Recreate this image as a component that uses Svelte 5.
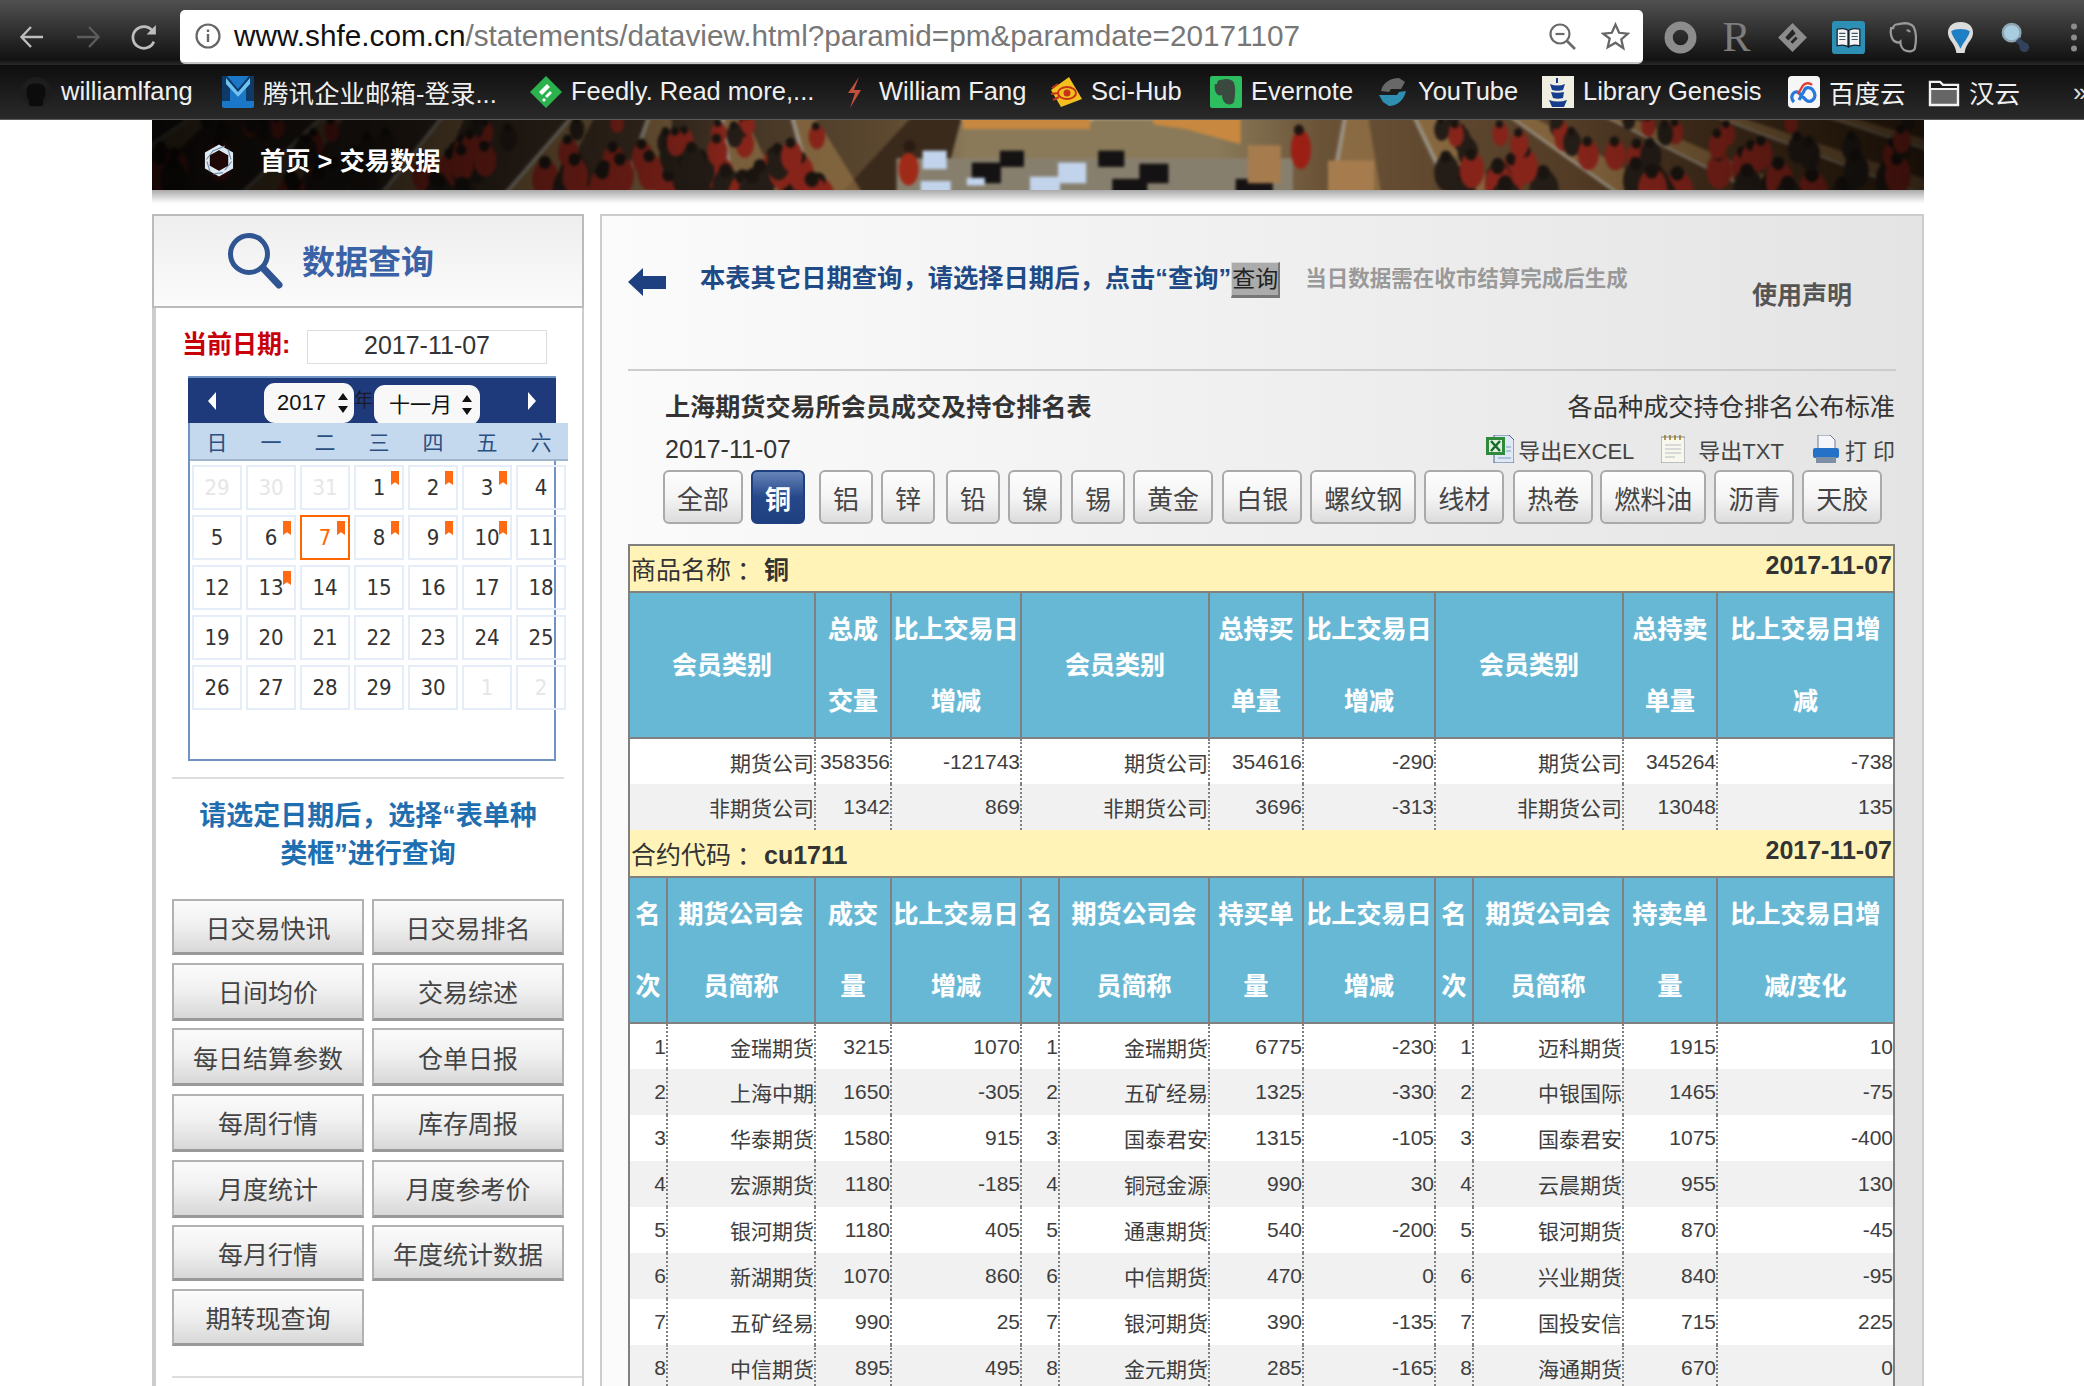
<script>
  const bookmarks = [
    { t: 'williamlfang', k: 'gh', x: 20 }, { t: '腾讯企业邮箱-登录...', k: 'qq', x: 222 }, { t: 'Feedly. Read more,...', k: 'fd', x: 530 },
    { t: 'William Fang', k: 'wf', x: 838 }, { t: 'Sci-Hub', k: 'sh', x: 1050 }, { t: 'Evernote', k: 'en', x: 1210 },
    { t: 'YouTube', k: 'yt', x: 1377 }, { t: 'Library Genesis', k: 'lg', x: 1542 }, { t: '百度云', k: 'bd', x: 1788 }, { t: '汉云', k: 'fo', x: 1928 }
  ];
  const bmWidth = (i) => (i + 1 < bookmarks.length ? bookmarks[i + 1].x - bookmarks[i].x : 120);
  const weekdays = ['日','一','二','三','四','五','六'];
  const days = [
    [29,0,0],[30,0,0],[31,0,0],[1,1,1],[2,1,1],[3,1,1],[4,1,0],
    [5,1,0],[6,1,1],[7,2,1],[8,1,1],[9,1,1],[10,1,1],[11,1,0],
    [12,1,0],[13,1,1],[14,1,0],[15,1,0],[16,1,0],[17,1,0],[18,1,0],
    [19,1,0],[20,1,0],[21,1,0],[22,1,0],[23,1,0],[24,1,0],[25,1,0],
    [26,1,0],[27,1,0],[28,1,0],[29,1,0],[30,1,0],[1,0,0],[2,0,0]
  ];
  const sideButtons = ['日交易快讯','日交易排名','日间均价','交易综述','每日结算参数','仓单日报','每周行情','库存周报','月度统计','月度参考价','每月行情','年度统计数据','期转现查询'];
  const tabs = ['全部','铜','铝','锌','铅','镍','锡','黄金','白银','螺纹钢','线材','热卷','燃料油','沥青','天胶'];
  const cols = [38,148,76,130,38,150,94,132,38,150,94,177];
  const summary = [
    ['期货公司','358356','-121743','期货公司','354616','-290','期货公司','345264','-738'],
    ['非期货公司','1342','869','非期货公司','3696','-313','非期货公司','13048','135']
  ];
  const ranks = [
    [1,'金瑞期货',3215,1070,1,'金瑞期货',6775,-230,1,'迈科期货',1915,10],
    [2,'上海中期',1650,-305,2,'五矿经易',1325,-330,2,'中银国际',1465,-75],
    [3,'华泰期货',1580,915,3,'国泰君安',1315,-105,3,'国泰君安',1075,-400],
    [4,'宏源期货',1180,-185,4,'铜冠金源',990,30,4,'云晨期货',955,130],
    [5,'银河期货',1180,405,5,'通惠期货',540,-200,5,'银河期货',870,-45],
    [6,'新湖期货',1070,860,6,'中信期货',470,0,6,'兴业期货',840,-95],
    [7,'五矿经易',990,25,7,'银河期货',390,-135,7,'国投安信',715,225],
    [8,'中信期货',895,495,8,'金元期货',285,-165,8,'海通期货',670,0]
  ];
  const rankHead = ['名<br>次','期货公司会<br>员简称','成交<br>量','比上交易日<br>增减','名<br>次','期货公司会<br>员简称','持买单<br>量','比上交易日<br>增减','名<br>次','期货公司会<br>员简称','持卖单<br>量','比上交易日增<br>减/变化'];

  // seeded scatter for the trading-floor photograph in the banner
  let seed = 23;
  const rnd = () => (seed = (seed * 16807) % 2147483647) / 2147483647;
  const aisles = [[-70,40],[90,170],[230,290],[353,419],[469,496],[579,569],[659,639],[1176,1190],[1295,1259],[1461,1355],[1600,1450],[1760,1560],[1900,1670]];
  const people = [];
  aisles.forEach(([b, t], i) => {
    if (i === 6 || i === 7) return;
    for (let n = 0; n < 16; n++) {
      const y = rnd() * 74 - 2;
      const x = t + (b - t) * (y / 70) + 12 + rnd() * 90;
      people.push({ x, y, r: 6 + (y / 70) * 9, red: rnd() > 0.5 });
    }
  });
  const darkMonitors = [[848,31,24,15],[820,42,29,19],[946,31,26,15],[987,43,29,18],[960,57,35,13],[1083,57,37,13]];
  const lightMonitors = [[771,31,24,17],[906,42,28,19],[769,59,30,11],[878,55,30,15],[815,56,18,7]];
</script>

<div class="page">
  <header class="toolbar">
    <svg class="nav" viewBox="0 0 26 26"><path d="M24 13H3M12 3 2.500 13 12 23" fill="none" stroke="#bdbdbd" stroke-width="2.400"/></svg>
    <svg class="nav fwd" viewBox="0 0 26 26"><path d="M2 13h21M14 3l9.500 10L14 23" fill="none" stroke="#5c5c5c" stroke-width="2.400"/></svg>
    <svg class="nav rel" viewBox="0 0 28 28"><path d="M23 18a10.500 10.500 0 1 1-1-10" fill="none" stroke="#bdbdbd" stroke-width="2.600"/><path d="M25 2v9h-9z" fill="#bdbdbd"/></svg>
    <div class="addr">
      <svg class="info" viewBox="0 0 28 28"><circle cx="14" cy="14" r="11.500" fill="none" stroke="#666" stroke-width="2.200"/><path d="M14 12v8M14 7.500v2.500" stroke="#666" stroke-width="2.400"/></svg>
      <span class="url"><b>www.shfe.com.cn</b>/statements/dataview.html?paramid=pm&amp;paramdate=20171107</span>
      <svg class="zoomi" viewBox="0 0 28 28"><circle cx="12" cy="12" r="9.500" fill="none" stroke="#6a6a6a" stroke-width="2.200"/><path d="M19 19l8 8" stroke="#6a6a6a" stroke-width="2.600"/><path d="M7.500 12h9" stroke="#6a6a6a" stroke-width="2.200"/></svg>
      <svg class="star" viewBox="0 0 28 28"><path d="M14 2.500l3.500 7.900 8.500.8-6.400 5.700 1.900 8.400L14 20l-7.500 4.300 1.900-8.400L2 11.200l8.500-.8z" fill="none" stroke="#666" stroke-width="2.200"/></svg>
    </div>
    <div class="exts">
      <svg viewBox="0 0 32 32"><circle cx="16" cy="16" r="11.500" fill="none" stroke="#8c8c8c" stroke-width="8"/></svg>
      <span class="rlogo">R</span>
      <svg viewBox="0 0 32 32"><path d="M16 2 30 16 16 30 2 16z" fill="#8c8c8c"/><path d="M16 8 9 16l3 3 7-7zM19 15l-5 5 2 2 5-5z" fill="#262626"/></svg>
      <svg viewBox="0 0 32 32"><rect width="32" height="32" rx="3" fill="#2c8fb3"/><path d="M5 8c4-1 8-1 10.500 1v16C13 23 9 23 5 24zM27 8c-4-1-8-1-10.500 1v16c2.500-2 6.500-2 10.500-1z" fill="#f4f4f4" stroke="#123" stroke-width="1.200"/><path d="M7 12h6M7 15h6M7 18h6M19 12h6M19 15h6M19 18h6" stroke="#456" stroke-width="1"/></svg>
      <svg viewBox="0 0 32 32"><path d="M10 3C7 3 5 5 5 7H3c-1 4 0 11 4 13 2 1 4 1 5 0 0 4 2 8 6 9 3 1 7 0 8-2 1-5 2-15-1-21-2-3-6-4-9-4z" fill="none" stroke="#9a9a9a" stroke-width="2.200"/><path d="M18 9c2 0 3 1 3 2" stroke="#9a9a9a" stroke-width="2" fill="none"/></svg>
      <svg viewBox="0 0 32 32"><path d="M16 1C7 1 3 7 4 13c1 6 7 9 8 18h8c1-9 7-12 8-18 1-6-3-12-12-12z" fill="#dcdcdc"/><path d="M7 10c4-3 14-3 18 0-1 6-6 10-9 17-3-7-8-11-9-17z" fill="#1f7fc4"/></svg>
      <svg viewBox="0 0 34 34"><circle cx="12" cy="12" r="9" fill="#a9cde0" stroke="#8fa6b0" stroke-width="2.500"/><path d="M18 19l9 9" stroke="#31425a" stroke-width="6"/><circle cx="25" cy="27" r="5" fill="#31425a"/></svg>
      <svg class="dots" viewBox="0 0 8 32"><circle cx="4" cy="5" r="3" fill="#8c8c8c"/><circle cx="4" cy="16" r="3" fill="#8c8c8c"/><circle cx="4" cy="27" r="3" fill="#8c8c8c"/></svg>
    </div>
  </header>

  <nav class="bookmarks">
    {#each bookmarks as b, i}
      <div class="bm" style="width:{bmWidth(i)}px">
        <svg viewBox="0 0 32 32">
          {#if b.k === 'gh'}
            <circle cx="16" cy="16" r="15" fill="#1d1d1d"/><path d="M9 30V24C6 21 5 14 9 9c3-2 11-2 14 0 4 5 3 12 0 15v6" fill="#0c0c0c"/>
          {:else if b.k === 'qq'}
            <rect width="32" height="32" rx="2" fill="#1b78c9"/><path d="M0 0h5l11 13L27 0h5v25H24V12l-8 9-8-9v13H0z" fill="#0d3a66"/><path d="M4 2l12 14L28 2v6l-12 13L4 8z" fill="#6fc3f2"/>
          {:else if b.k === 'fd'}
            <path d="M16 0 32 16 16 32 0 16z" fill="#2bb24c"/><path d="M17 8l-8 8 3 3 8-8zM20 15l-5 5 2 2 5-5zM14 22l-2 2 2 2 2-2z" fill="#fff"/>
          {:else if b.k === 'wf'}
            <path d="M21 1 10 17h7l-5 15 11-18h-7z" fill="#c6513b"/>
          {:else if b.k === 'sh'}
            <path d="M19 1 32 23 11 31 1 14z" fill="#f4c020"/><ellipse cx="17" cy="17" rx="9" ry="6" fill="none" stroke="#c83218" stroke-width="2"/><circle cx="17" cy="17" r="3.500" fill="#c83218"/><path d="M2 12 8 8M1 18l7-1M3 24l6-3" stroke="#c83218" stroke-width="2"/>
          {:else if b.k === 'en'}
            <rect width="32" height="32" rx="2" fill="#2dbe60"/><path d="M10 4C8 4 7 6 7 8H5c-1 4 0 9 3 11 2 1 3 0 4 0 0 4 2 8 5 9 3 1 6 0 7-2 1-5 2-14 0-19-1-3-5-4-8-4z" fill="#3a4a3f"/>
          {:else if b.k === 'yt'}
            <path d="M4 15C6 6 14 2 22 2l6 4-4 7H14l-2 3z" fill="#686868"/><path d="M2 19h18l2-3 7-1c-2 9-9 15-17 15l-6-4z" fill="#2e8fb3"/>
          {:else if b.k === 'lg'}
            <rect width="32" height="32" fill="#efeee0"/><path d="M14 2h2v5h-2zM8 8c5 2 10 2 15 0l-2 6c-3 1-8 1-11 0zM9 16c4 1 9 1 13 0l-1 6c-3 1-7 1-10 0zM7 24c6 2 12 2 18 0l-3 7H10z" fill="#173e8c"/>
          {:else if b.k === 'bd'}
            <rect width="32" height="32" rx="4" fill="#f6f6f6"/><path d="M6 26c-5-5 0-13 5-9l7 7c5 4 11-2 8-8-2-5-8-6-10-1l-5 9" fill="none" stroke="#2878dc" stroke-width="3.200"/><path d="M10 18l4-7c2-4 7-5 10-2" fill="none" stroke="#e53a2e" stroke-width="2.400"/>
          {:else}
            <path d="M2 6h10l3 3h15v20H2z" fill="#666" stroke="#f2f2f2" stroke-width="2.400"/><path d="M2 6h10l3 3h15v4H2z" fill="#1a1a1a" stroke="#f2f2f2" stroke-width="2"/>
          {/if}
        </svg>
        <span>{b.t}</span>
      </div>
    {/each}
    <span class="more">»</span>
  </nav>

  <div class="banner">
    <svg class="photo" viewBox="0 0 1772 70" preserveAspectRatio="none">
      <defs>
        <linearGradient id="floor" x1="0" x2="1" y1="0" y2="0">
          <stop offset="0" stop-color="#2a2018"/><stop offset=".3" stop-color="#3a2c20"/><stop offset=".42" stop-color="#5e4a30"/>
          <stop offset=".46" stop-color="#8a7a5a"/><stop offset=".6" stop-color="#8a7a5a"/><stop offset=".66" stop-color="#6a5236"/>
          <stop offset=".85" stop-color="#4a3420"/><stop offset="1" stop-color="#3a2410"/>
        </linearGradient>
        <linearGradient id="shade" x1="0" x2="1" y1="0" y2="0">
          <stop offset="0" stop-color="#000" stop-opacity=".82"/><stop offset=".12" stop-color="#000" stop-opacity=".68"/><stop offset=".27" stop-color="#000" stop-opacity=".28"/><stop offset=".33" stop-color="#000" stop-opacity="0"/>
          <stop offset=".8" stop-color="#000" stop-opacity="0"/><stop offset="1" stop-color="#000" stop-opacity=".62"/>
        </linearGradient>
      </defs>
      <rect width="1772" height="70" fill="url(#floor)"/>
      <path d="M810 0h130v4H810z" fill="#d0bd92"/>
      <path d="M811 0h127v11H811z" fill="#c8883f"/>
      <path d="M940 0h62v2h-62z" fill="#d0bd92"/>
      <path d="M1001 0h87v25l-55-14-32-4z" fill="#c8883f"/>
      <path d="M690 70 760 0h50l-20 70z" fill="#3a2a1c"/>
      <path d="M745 38h395v32H745z" fill="#877f6e"/>
      {#each aisles as a}
        <path d="M{a[0] + 3} 70 {a[1] + 3} 0h22L{a[0] + 52} 70z" fill="#a5824f" opacity=".55"/>
        <path d="M{a[0]} 70 {a[1]} 0h4L{a[0] + 5} 70z" fill="#a09c90" opacity=".85"/>
      {/each}
      {#each darkMonitors as m}<rect x={m[0]} y={m[1]} width={m[2]} height={m[3]} fill="#141212"/>{/each}
      {#each lightMonitors as m}<rect x={m[0]} y={m[1]} width={m[2]} height={m[3]} fill="#c2d4ec"/>{/each}
      <path d="M1095 26h33v35h-33zM1175 40h46v30h-46z" fill="#a67c4e"/>
      {#each people as p}
        <ellipse cx={p.x} cy={p.y + p.r * .8} rx={p.r * 1.1} ry={p.r * 1.5} fill={p.red ? '#86241a' : '#241c16'}/>
        <circle cx={p.x - 1} cy={p.y - p.r * .5} r={p.r * .5} fill="#191410"/>
      {/each}
      <ellipse cx="757" cy="48" rx="10" ry="15" fill="#a02a18"/><circle cx="758" cy="27" r="6" fill="#2a1c14"/>
      <ellipse cx="1148" cy="30" rx="10" ry="18" fill="#9c1f15"/><circle cx="1146" cy="12" r="5" fill="#1e1410"/>
      <rect width="1772" height="70" fill="url(#shade)"/>
    </svg>
    <svg class="logo" viewBox="0 0 32 34">
      <path d="M16 3.500 28 10.200v13.600L16 30.500 4 23.800V10.200z" fill="none" stroke="#dfe9f2" stroke-width="5"/>
      <path d="M9 7.500 22 2M28.500 16 25 5M22 27 29 18M10 31 20 29.500M3.500 18 7 29M10 7 3 16" stroke="#6d8ba8" stroke-width="1.100"/>
    </svg>
    <span class="crumb">首页 &gt; 交易数据</span>
  </div>

  <div class="layout">
    <aside class="side">
      <div class="side-head">
        <svg viewBox="0 0 56 58"><circle cx="22" cy="22" r="18.500" fill="none" stroke="#2f5592" stroke-width="5"/><path d="M36 36 52 53" stroke="#2f5592" stroke-width="7" stroke-linecap="round"/></svg>
        <span>数据查询</span>
      </div>
      <div class="side-body">
        <div class="cur">
          <span>当前日期:</span>
          <div class="cur-box">2017-11-07</div>
        </div>
        <div class="cal">
          <div class="cal-top">
            <svg class="tri" viewBox="0 0 8 18"><path d="M8 0v18L0 9z" fill="#fff"/></svg>
            <div class="sel yr">2017<svg viewBox="0 0 10 20"><path d="M5 0l5 7H0zM5 20l5-7H0z" fill="#111"/></svg></div>
            <span class="nian">年</span>
            <div class="sel mo"><span>十一月</span><svg viewBox="0 0 10 20"><path d="M5 0l5 7H0zM5 20l5-7H0z" fill="#111"/></svg></div>
            <svg class="tri r" viewBox="0 0 8 18"><path d="M0 0v18l8-9z" fill="#fff"/></svg>
          </div>
          <div class="wk">
            {#each weekdays as w}<span>{w}</span>{/each}
          </div>
          <div class="grid">
            {#each days as d}
              <div class="day" class:off={d[1] === 0} class:today={d[1] === 2}>
                {d[0]}
                {#if d[2]}<i></i>{/if}
              </div>
            {/each}
          </div>
        </div>
        <div class="rule"></div>
        <p class="hint">请选定日期后，选择“表单种<br>类框”进行查询</p>
        <div class="btns">
          {#each sideButtons as s}<div class="sbtn">{s}</div>{/each}
        </div>
        <div class="rule end"></div>
      </div>
    </aside>

    <main class="main">
      <div class="query">
        <svg class="arrow" viewBox="0 0 38 28"><path d="M0 14 15 0v8h23v13H15v7z" fill="#1f4080"/></svg>
        <span class="q-text">本表其它日期查询，请选择日期后，点击“查询”</span>
        <span class="q-btn">查询</span>
        <span class="q-note">当日数据需在收市结算完成后生成</span>
        <span class="q-law">使用声明</span>
      </div>
      <div class="divider"></div>
      <div class="title-row">
        <h1>上海期货交易所会员成交及持仓排名表</h1>
        <span>各品种成交持仓排名公布标准</span>
      </div>
      <div class="date-row">
        <span class="dt">2017-11-07</span>
        <div class="exp">
          <svg class="xl" viewBox="0 0 28 28"><path d="M8 0h15l5 5v23H8z" fill="#dfe8f4" stroke="#44688f"/><rect x="0" y="2" width="19" height="18" fill="#2f8a3c"/><rect x="3" y="5" width="13" height="12" fill="#dff0df"/><path d="M5 6l9 10M14 6 5 16" stroke="#1a6a2a" stroke-width="2.500"/><path d="M20 12h5M20 16h5M12 23h13" stroke="#7d9cc0"/></svg>
          <span class="l1">导出EXCEL</span>
          <svg class="tx" viewBox="0 0 24 28"><rect y="2" width="24" height="26" fill="#f7f7ee" stroke="#7d8a99"/><path d="M4 0v5M9 0v5M14 0v5M19 0v5" stroke="#a07820" stroke-width="1.500"/><path d="M4 10h16M4 14h16M4 18h16M4 22h10" stroke="#b8bcc4"/></svg>
          <span class="l2">导出TXT</span>
          <svg class="pr" viewBox="0 0 28 28"><path d="M6 0h12l5 5v10H6z" fill="#f4f6fa" stroke="#6a7d95"/><rect x="1" y="13" width="26" height="10" rx="2" fill="#2472c8"/><rect x="4" y="22" width="20" height="6" fill="#7d8fa5"/></svg>
          <span class="l3">打 印</span>
        </div>
      </div>
      <div class="tabs">
        {#each tabs as t}<div class="tab" class:on={t === '铜'}>{t}</div>{/each}
      </div>

      <table>
        <colgroup>{#each cols as c}<col style="width:{c}px">{/each}</colgroup>
        <tbody>
          <tr class="band first"><td colspan="12"><div class="band-in"><span>商品名称<i>：</i><b>铜</b></span><b class="bd">2017-11-07</b></div></td></tr>
          <tr class="head">
            <th colspan="2">会员类别</th><th>总成<br>交量</th><th>比上交易日<br>增减</th>
            <th colspan="2">会员类别</th><th>总持买<br>单量</th><th>比上交易日<br>增减</th>
            <th colspan="2">会员类别</th><th>总持卖<br>单量</th><th>比上交易日增<br>减</th>
          </tr>
          {#each summary as r, i}
            <tr class:alt={i % 2 === 1}>
              {#each r as v, j}<td colspan={j % 3 === 0 ? 2 : 1}>{v}</td>{/each}
            </tr>
          {/each}
          <tr class="band"><td colspan="12"><div class="band-in"><span>合约代码<i>：</i><b>cu1711</b></span><b class="bd">2017-11-07</b></div></td></tr>
          <tr class="head">
            {#each rankHead as h}<th>{@html h}</th>{/each}
          </tr>
          {#each ranks as r, i}
            <tr class:alt={i % 2 === 1}>
              {#each r as v}<td>{v}</td>{/each}
            </tr>
          {/each}
        </tbody>
      </table>
    </main>
  </div>
</div>

<style>
  :global(body) { margin: 0; background: #fff; }
  .page {
    width: 2084px; height: 1386px; overflow: hidden; background: #fff; color: #444;
    font-family: "Liberation Sans", "Noto Sans CJK SC", sans-serif;
  }
  .toolbar {
    height: 65px; box-sizing: border-box; padding: 9px 0 0 19px; display: flex; align-items: center;
    background: linear-gradient(#505050, #121212 92%, #2a2a2a);
  }
  .nav { width: 26px; height: 26px; flex: none; }
  .fwd { margin-left: 30px; }
  .rel { margin-left: 29px; width: 29px; height: 29px; }
  .addr {
    margin-left: 21px; width: 1463px; height: 54px; box-sizing: border-box; background: #fff;
    border-radius: 5px; border-bottom: 2px solid #c4c4c4; display: flex; align-items: center; padding-left: 14px;
  }
  .info { width: 28px; height: 28px; flex: none; }
  .url { margin-left: 12px; font-size: 29.750px; color: #777; white-space: nowrap; flex: none; width: 1099px; }
  .url b { font-weight: 400; color: #111; }
  .zoomi { width: 28px; height: 28px; margin-left: 215px; flex: none; }
  .star { width: 29px; height: 29px; margin-left: 25px; flex: none; }
  .exts { margin-left: 21px; display: flex; align-items: center; gap: 23px; }
  .exts svg { width: 33px; height: 33px; flex: none; }
  .rlogo { width: 33px; text-align: center; font: 42px/33px "Liberation Serif", serif; color: #7d7d7d; }
  .exts .dots { width: 8px; margin-left: 14px; }

  .bookmarks {
    height: 55px; box-sizing: border-box; padding-left: 20px; display: flex; align-items: center;
    background: linear-gradient(#0e0e0e, #2a2a2a); border-bottom: 1px solid #5a5a5a; position: relative;
  }
  .bm { display: flex; align-items: center; gap: 9px; color: #f0f0f0; font-size: 25.500px; white-space: nowrap; flex: none; }
  .bm span { margin-top: -2px; }
  .bm svg { width: 32px; height: 32px; flex: none; }
  .more { position: absolute; left: 2073px; color: #ddd; font-size: 26px; }

  .banner {
    margin-left: 152px; width: 1772px; height: 70px; box-sizing: border-box; padding-top: 11px; position: relative; display: flex; align-items: center; overflow: hidden;
  }
  .photo { position: absolute; inset: -3px; width: calc(100% + 6px); height: calc(100% + 6px); filter: blur(1.800px); }
  .logo { position: relative; margin-left: 51px; width: 32px; height: 33px; }
  .crumb { position: relative; margin-left: 25px; font-size: 25.300px; color: #fff; font-weight: 700; margin-top: -3px; }

  .layout { margin: 24px 0 0 152px; width: 1772px; display: flex; gap: 16px; align-items: flex-start; position: relative; }
  .layout::before {
    content: ""; position: absolute; left: 0; right: 0; top: -24px; height: 14px;
    background: linear-gradient(#a9a9a9, #f2f2f2 80%, #fff);
  }

  .side { width: 432px; flex: none; height: 1200px; box-sizing: border-box; }
  .side-head {
    height: 94px; box-sizing: border-box; border: 2px solid #bbb; display: flex; align-items: center; padding-left: 73px;
    background: linear-gradient(#eee, #fbfbfb); color: #3a62a6; font-size: 33px; font-weight: 700; gap: 19px;
  }
  .side-head span { margin-top: -2px; }
  .side-head svg { width: 56px; height: 58px; }
  .side-body { border-left: 4px solid #ccc; border-right: 2px solid #ccc; height: 1100px; box-sizing: border-box; padding: 22px 0 0 16px; }
  .cur { display: flex; align-items: center; height: 34px; padding-left: 10px; }
  .cur span { color: #c8000a; font-size: 25px; font-weight: 700; width: 125px; padding-bottom: 10px; }
  .cur-box { width: 240px; height: 34px; box-sizing: border-box; border: 1px solid #ddd; text-align: center; font-size: 25px; line-height: 29px; color: #333; }
  .cal { margin: 12px 0 0 16px; width: 368px; height: 385px; box-sizing: border-box; border: 2px solid #6f94c4; border-top: 0; position: relative; }
  .cal-top { height: 47px; margin: 0 -2px; background: #1f3a7a; border-top: 2px solid #6f94c4; box-sizing: border-box; display: flex; align-items: center; position: relative; }
  .tri { position: absolute; left: 20px; top: 14px; width: 8px; height: 18px; }
  .tri.r { left: 340px; }
  .sel { position: absolute; background: #f8f8f8; border-radius: 11px; height: 40px; display: flex; align-items: center; color: #111; box-sizing: border-box; white-space: nowrap; }
  .sel svg { width: 10px; height: 20px; flex: none; }
  .yr { left: 76px; top: 5px; width: 90px; font-size: 22px; padding-left: 13px; gap: 12px; }
  .mo { left: 186px; top: 7px; width: 106px; font-size: 21px; padding-left: 15px; gap: 10px; }
  .mo span { margin-top: -5px; }
  .nian { position: absolute; left: 166px; top: 7px; font-size: 19px; color: #1a1a2a; }
  .wk { width: 378px; height: 38px; box-sizing: border-box; background: #c5d9ee; border-bottom: 2px solid #a0b4cc; display: grid; grid-template-columns: repeat(7, 54px); justify-items: center; align-items: center; font-size: 21px; color: #2a4f80; position: relative; }
  .grid { position: relative; margin: 4px 0 0 2px; display: grid; grid-template-columns: repeat(7, 50px); gap: 5px 4px; width: 378px; }
  .day {
    height: 45px; box-sizing: border-box; border: 2px solid #e4edf8; display: flex; align-items: center; justify-content: center;
    position: relative; font: 22px "DejaVu Sans Condensed", "Liberation Sans", sans-serif; color: #333;
  }
  .day.off { color: #e6e6e6; }
  .day.today { border-color: #f60; color: #f60; }
  .day i { position: absolute; top: 4px; right: 3px; width: 8px; height: 14px; background: #ff6a13; clip-path: polygon(0 0, 100% 0, 100% 100%, 50% 80%, 0 100%); }
  .rule { height: 2px; width: 392px; background: #ddd; margin-top: 16px; }
  .rule.end { width: 410px; margin-top: 30px; }
  .hint { margin: 18px 0 0; width: 392px; text-align: center; color: #1f6eb0; font-size: 27px; font-weight: 700; line-height: 38px; }
  .btns { margin-top: 26px; width: 392px; display: grid; grid-template-columns: 192px 192px; column-gap: 8px; grid-template-rows: 56px 58px 58px 58px 58px 56px 57px; row-gap: 7.670px; }
  .sbtn {
    border: 2px solid #b2b2b2; border-bottom: 3px solid #999; box-sizing: border-box; display: flex; align-items: center; justify-content: center;
    background: linear-gradient(#fbfbfb, #f1f1f1 45%, #d8d8d8); font-size: 25px; color: #444;
  }

  .main {
    width: 1324px; flex: none; height: 1200px; box-sizing: border-box; border: 2px solid #ccc; border-bottom: 0; padding: 0 26px 0 26px;
    background: linear-gradient(to right, #fbfbfb, #e4e4e4);
  }
  .query { height: 153px; display: flex; align-items: flex-start; position: relative; }
  .arrow { width: 38px; height: 28px; margin-top: 52px; flex: none; }
  .q-text { margin: 46px 0 0 34px; font-size: 25.300px; line-height: 32px; font-weight: 700; color: #1f4a85; white-space: nowrap; }
  .q-btn {
    margin: 46px 0 0 0; width: 49px; height: 36px; box-sizing: border-box; background: #ababab; text-align: center; color: #222;
    border-width: 1px 2px 3px 1px; border-style: solid; border-color: #d8d8d8 #777 #777 #d8d8d8; font-size: 23px; line-height: 32px; flex: none; white-space: nowrap; overflow: hidden;
  }
  .q-note { margin: 48px 0 0 25px; font-size: 21.500px; line-height: 30px; font-weight: 700; color: #999; white-space: nowrap; }
  .q-law { position: absolute; left: 1124px; top: 64px; font-size: 25px; line-height: 30px; font-weight: 700; color: #555; }
  .divider { height: 2px; background: #ccc; width: 1268px; }
  .title-row { margin-top: 19px; padding-left: 37px; height: 30px; display: flex; justify-content: space-between; align-items: center; font-size: 25.200px; color: #333; width: 1267px; box-sizing: border-box; }
  .title-row h1 { margin: 0; font-size: 25.100px; font-weight: 700; color: #333; }
  .date-row { margin-top: 14px; padding-left: 37px; height: 30px; width: 1267px; box-sizing: border-box; display: flex; justify-content: space-between; align-items: center; font-size: 25px; color: #333; }
  .exp { display: flex; align-items: center; font-size: 22px; color: #444; }
  .exp svg { flex: none; height: 28px; }
  .xl { width: 28px; } .tx { width: 24px; margin-left: 27px; } .pr { width: 28px; margin-left: 28px; }
  .l1 { margin-left: 4px; } .l2 { margin-left: 13px; } .l3 { margin-left: 5px; }
  .tabs { margin: 6px 0 0 35px; display: flex; gap: 8px; }
  .tab {
    height: 54px; box-sizing: border-box; padding: 0 12px; border: 2px solid #aaa; border-radius: 6px; display: flex; align-items: center; justify-content: center;
    background: linear-gradient(#fdfdfd, #f5f5f5 50%, #dcdcdc); font-size: 26px; color: #444;
  }
  .tab.on { background: linear-gradient(#6683b8, #26488a 50%, #1f4080); color: #fff; border-color: #1f4080; font-weight: 700; }
  .tab:nth-child(3) { margin-left: 6px; }
  .tab:nth-child(5) { margin-left: 3px; }
  .tab:nth-child(7) { margin-left: 1px; }
  .tab:nth-child(9) { margin-left: 1px; }
  .tab:nth-child(12) { margin-left: 1px; }
  .tab:nth-child(13) { margin-left: -1px; }

  table { margin-top: 20px; width: 1267px; table-layout: fixed; border-collapse: collapse; border: 2px solid #808080; }
  td { height: 46px; box-sizing: border-box; padding: 0; text-align: right; font-size: 21px; color: #3e3e3e; border-right: 2px dotted #808080; background: #fff; white-space: nowrap; }
  td:last-child { border-right: 0; }
  .alt td { background: #f1f1f1; }
  .band td { height: 47px; background: #fff3b8; padding: 0; border: 0; border-bottom: 2px solid #808080; text-align: left; font-size: 25px; color: #333; }
  .band-in { display: flex; justify-content: space-between; padding: 0 1px 0 1px; }
  .band-in span { padding-top: 0; margin-top: -1px; }
  .band-in i { font-style: normal; margin: 0 2px 0 6px; }
  .band-in b { font-weight: 700; }
  .bd { line-height: 28px; }
  th { height: 144px; padding: 0; box-sizing: border-box; background: #66b8d5; color: #fff; font-size: 25px; font-weight: 700; line-height: 72px; border: 2px solid #808080; text-shadow: 0 0 1px rgba(255, 255, 255, .5); white-space: nowrap; overflow: hidden; }
</style>
